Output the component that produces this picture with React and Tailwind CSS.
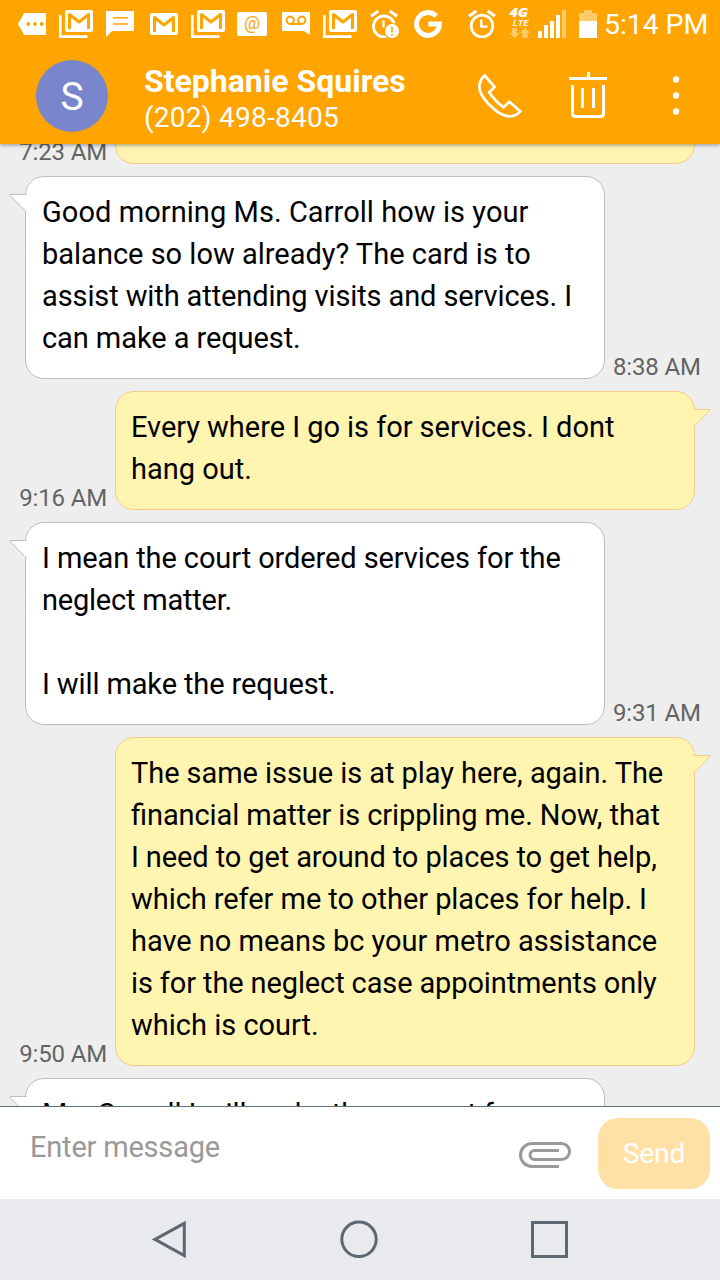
const MESSAGES = [
  { mine: true, time: "7:23 AM", lines: [["", ""]] },
  {
    mine: false,
    time: "8:38 AM",
    lines: [
      ["Good morning Ms. Carroll how is your", "tracking-[0.06px]"],
      ["balance so low already? The card is to", ""],
      ["assist with attending visits and services. I", "tracking-[-0.11px]"],
      ["can make a request.", "tracking-[-0.08px]"],
    ],
  },
  {
    mine: true,
    time: "9:16 AM",
    lines: [
      ["Every where I go is for services. I dont", "tracking-[-0.04px]"],
      ["hang out.", ""],
    ],
  },
  {
    mine: false,
    time: "9:31 AM",
    lines: [
      ["I mean the court ordered services for the", "tracking-[-0.1px]"],
      ["neglect matter.", "tracking-[-0.22px]"],
      ["", ""],
      ["I will make the request.", "tracking-[-0.12px]"],
    ],
  },
  {
    mine: true,
    time: "9:50 AM",
    lines: [
      ["The same issue is at play here, again. The", "tracking-[-0.06px]"],
      ["financial matter is crippling me. Now, that", "tracking-[-0.09px]"],
      ["I need to get around to places to get help,", "tracking-[-0.11px]"],
      ["which refer me to other places for help. I", "tracking-[-0.06px]"],
      ["have no means bc your metro assistance", "tracking-[-0.03px]"],
      ["is for the neglect case appointments only", "tracking-[-0.12px]"],
      ["which is court.", ""],
    ],
  },
  { mine: false, time: "", lines: [["Ms. Carroll I will make the request for", "tracking-[-0.03px]"], ["", ""]] },
];

function Envelope({ stacked, className }) {
  return (
    <svg className={className} viewBox={stacked ? "0 0 34 28" : "0 0 28 22"} fill="none">
      {stacked && <path d="M1.3 5V26.6H28.5" stroke="#fff" strokeWidth="2.6" />}
      <g transform={stacked ? "translate(6 0)" : undefined}>
        <rect width="28" height="22" rx="2.2" fill="#fff" />
        <path d="M4.5 19V4.5L14 12L23.5 4.5V19" stroke="#ffa400" strokeWidth="3" strokeLinejoin="round" />
      </g>
    </svg>
  );
}

function StatusBar() {
  return (
    <div className="flex h-12 items-start bg-[#ffa400]">
      <svg className="mt-[13px] ml-[18px] h-[22px] w-7 shrink-0" viewBox="0 0 28 22">
        <path d="M6.3 0H28V22H6.3L0 11Z" fill="#fff" />
        <g fill="#ffa400">
          <circle cx="10.3" cy="11" r="1.9" />
          <circle cx="17" cy="11" r="1.9" />
          <circle cx="23.7" cy="11" r="1.9" />
        </g>
      </svg>
      <Envelope stacked className="mt-[10px] ml-[13px] h-7 w-[34px] shrink-0" />
      <svg className="mt-[11px] ml-[13px] h-[26px] w-7 shrink-0" viewBox="0 0 28 26">
        <path d="M0 0H28V20H6L0 26Z" fill="#fff" />
        <path d="M7 6.7H22M7 13H22" stroke="#ffa400" strokeWidth="1.4" />
      </svg>
      <Envelope className="mt-[13px] ml-4 h-[22px] w-7 shrink-0" />
      <Envelope stacked className="mt-[10px] ml-[13px] h-7 w-[34px] shrink-0" />
      <div className="mt-3 ml-3 flex h-6 w-[30px] shrink-0 justify-center rounded-[2px] bg-white text-[18px] leading-[22px] text-[#ffa400]">
        @
      </div>
      <svg className="mt-3 ml-[15px] h-[23px] w-7 shrink-0" viewBox="0 0 28 23">
        <path d="M0 0H28V23L22 19H0Z" fill="#fff" />
        <g fill="none" stroke="#ffa400" strokeWidth="2">
          <circle cx="8.2" cy="8.2" r="3.6" />
          <circle cx="19.8" cy="8.2" r="3.6" />
          <path d="M8 12H20" />
        </g>
      </svg>
      <Envelope stacked className="mt-[10px] ml-[13px] h-7 w-[34px] shrink-0" />
      <svg className="mt-[10px] ml-[13px] h-7 w-[29px] shrink-0" viewBox="0 0 29 28">
        <g stroke="#fff" fill="none">
          <circle cx="14" cy="16.5" r="10.5" strokeWidth="2.8" />
          <path d="M1 6.2L8.3 1M19.7 1L27 6.2" strokeWidth="3.2" />
          <path d="M13.5 10V17.5" strokeWidth="2.2" />
        </g>
        <circle cx="22" cy="21" r="8.2" fill="#ffa400" />
        <circle cx="22" cy="21" r="7" fill="#fff" />
        <path d="M22 16.5V22.4M22 24V25.8" stroke="#ffa400" strokeWidth="1.6" />
      </svg>
      <svg className="mt-[10px] ml-[15px] h-7 w-7 shrink-0" viewBox="0 0 28 28" fill="none">
        <path d="M22.2 6.1A11.4 11.4 0 1 0 25.4 14H14.3" stroke="#fff" strokeWidth="5" />
      </svg>
      <svg className="mt-[10px] ml-[26px] h-7 w-7 shrink-0" viewBox="0 0 28 28" fill="none" stroke="#fff">
        <circle cx="14" cy="16" r="10.8" strokeWidth="2.8" />
        <path d="M1 6.2L8.3 1M19.7 1L27 6.2" strokeWidth="3.2" />
        <path d="M13.3 9.5V16.6H19.5" strokeWidth="2.4" />
      </svg>
      <svg className="mt-2 ml-[12px] h-[31px] w-[24px] shrink-0 overflow-visible" viewBox="0 0 24 31">
        <text x="1.2" y="9.4" fill="#fff" fontSize="12.4" fontWeight="800" fontStyle="italic" textLength="19" lengthAdjust="spacingAndGlyphs" fontFamily="Open Sans, sans-serif">4G</text>
        <text x="4.5" y="18.3" fill="#fff" fontSize="9.4" fontWeight="600" fontStyle="italic" textLength="16" lengthAdjust="spacingAndGlyphs" fontFamily="Open Sans, sans-serif">LTE</text>
        <path d="M4 20H9V25H12L6.5 30L1 25H4ZM14.5 30H19.5V25H22.5L17 20L11.5 25H14.5Z" fill="#ffcb66" />
      </svg>
      <svg className="mt-[10px] ml-[6px] h-7 w-7 shrink-0" viewBox="0 0 28 28" fill="#fff">
        <path d="M0 21H4V28H0ZM6 15H10V28H6ZM12 11H16V28H12ZM18 5H22V28H18Z" />
        <path d="M24 0H28V28H24Z" fill="#ffcb66" />
      </svg>
      <svg className="mt-[10px] ml-[13px] h-7 w-[18px] shrink-0" viewBox="0 0 18 28">
        <path d="M5 0H13V3H18V11H0V3H5Z" fill="#ffcb66" />
        <path d="M0 11H18V28H0Z" fill="#fff" />
      </svg>
      <span className="ml-[7px] text-[28.5px] leading-[50px] tracking-[-0.1px] whitespace-nowrap text-white">5:14 PM</span>
    </div>
  );
}

function Header() {
  return (
    <header className="relative z-10 h-36 shrink-0 bg-[#ffa400] shadow-[0_1px_4px_rgba(0,0,0,0.4)]">
      <StatusBar />
      <div className="flex h-24 items-center pl-9 text-white">
        <div className="flex size-[72px] shrink-0 items-center justify-center rounded-full bg-[#7986cb] pt-[3px] text-[39px] leading-none">
          S
        </div>
        <div className="ml-9 w-[333px] pt-[7px] whitespace-nowrap">
          <div className="-mt-px mb-px text-[32px] leading-9 font-bold">Stephanie Squires</div>
          <div className="text-[28px] leading-9 tracking-[0.25px]">(202) 498-8405</div>
        </div>
        <svg className="h-[48px] w-[46px] shrink-0" viewBox="477 72 46 48" fill="none" stroke="#fff" strokeWidth="2.7">
          <path d="M484.7 75.5L494.6 87L489.2 92.2Q494.5 100.5 503.6 107.3L509.3 101.8L520.3 111.3C515 117.3 507 118 499 112.8C492 108 485.5 101.5 481.5 94.5C477.5 87.5 479.5 79.5 484.7 75.5Z" />
        </svg>
        <svg className="ml-[46px] h-[48px] w-[38px] shrink-0" viewBox="569 72 38 48" fill="none" stroke="#fff" strokeWidth="3">
          <path d="M569 78.5H607M588.5 72V78M572.5 85V113.5Q572.5 116.5 575.5 116.5H600.5Q603.5 116.5 603.5 113.5V85M582.5 88V108M593.5 88V108" />
        </svg>
        <svg className="ml-[65px] h-[48px] w-2 shrink-0" viewBox="0 0 8 48" fill="#fff">
          <circle cx="4" cy="7.5" r="3.2" />
          <circle cx="4" cy="23.5" r="3.2" />
          <circle cx="4" cy="39.5" r="3.2" />
        </svg>
      </div>
    </header>
  );
}

function Tail({ mine }) {
  return mine ? (
    <svg className="absolute top-[16px] -right-[17px] h-5 w-[18px]" viewBox="0 0 18 20">
      <path d="M0 1.5H17L1.5 18.5H0Z" fill="#fff5b0" />
      <path d="M0.5 1.5H17V2.5L0.5 19" fill="none" stroke="#f6cb85" />
    </svg>
  ) : (
    <svg className="absolute top-[16px] -left-[17px] h-5 w-[18px]" viewBox="0 0 18 20">
      <path d="M18 1.5H1L16.5 18.5H18Z" fill="#fff" />
      <path d="M17.5 1.5H1V2.5L17.5 19" fill="none" stroke="#bdbdbd" />
    </svg>
  );
}

function Message({ mine, time, lines }) {
  return (
    <div className={mine ? "flex flex-row-reverse items-end pr-[25px]" : "flex items-end pl-[25px]"}>
      <div
        className={
          mine
            ? "relative w-[580px] rounded-[19px] border border-[#f6cb85] bg-[#fff5b0] pt-[14px] pr-2 pb-[19px] pl-[15px]"
            : "relative w-[580px] rounded-[19px] border border-[#bdbdbd] bg-white pt-[14px] pr-2 pb-[19px] pl-4"
        }
      >
        <Tail mine={mine} />
        {lines.map(([line, tracking], i) => (
          <p
            key={i}
            className={`h-[42px] text-[29px] leading-[42px] whitespace-nowrap text-black [font-feature-settings:'liga'_1] ${tracking}`}
          >
            {line}
          </p>
        ))}
      </div>
      <time className="mx-2 mb-[-2px] text-[24px] leading-7 tracking-[-0.15px] whitespace-nowrap text-[#646464]">{time}</time>
    </div>
  );
}

function Composer() {
  return (
    <div className="flex h-[93px] shrink-0 items-start border-t border-[#607482] bg-white">
      <span className="mt-[22px] ml-[30px] w-[489px] text-[29px] leading-9 tracking-[-0.2px] text-[#999]">Enter message</span>
      <svg className="mt-[34px] h-7 w-[53px] shrink-0" viewBox="519 1141 53 28" fill="none" stroke="#999" strokeWidth="3">
        <path d="M559 1166.5H532A11.5 11.5 0 0 1 532 1143.5H561.5A8 8 0 0 1 561.5 1159.5H534.5A4.5 4.5 0 0 1 534.5 1150.5H559" />
      </svg>
      <button className="mt-[11px] ml-[26px] h-[71px] w-[112px] shrink-0 rounded-[20px] bg-[#ffe0a5] text-[28px] text-white">
        Send
      </button>
    </div>
  );
}

function NavBar() {
  return (
    <nav className="flex h-[81px] shrink-0 items-start bg-[#e9eaee] pt-[21px]">
      <svg className="ml-[152px] h-[38px] w-[35px]" viewBox="0 0 35 38" fill="none" stroke="#5c6972" strokeWidth="3">
        <path d="M3 19.4L32.3 3.4V35.6Z" />
      </svg>
      <svg className="ml-[153px] h-[38px] w-[38px]" viewBox="0 0 38 38" fill="none" stroke="#5c6972" strokeWidth="3">
        <circle cx="19" cy="19.3" r="17.2" />
      </svg>
      <div className="mt-px ml-[153px] size-[37px] border-3 border-[#5c6972]" />
    </nav>
  );
}

export default function App() {
  return (
    <div className="flex h-[1280px] w-[720px] flex-col overflow-hidden bg-[#eee] font-[Roboto,sans-serif]">
      <Header />
      <main className="h-[962px] shrink-0 overflow-hidden">
        <div className="-mt-[57px] flex flex-col gap-3">
          {MESSAGES.map((m, i) => (
            <Message key={i} {...m} />
          ))}
        </div>
      </main>
      <Composer />
      <NavBar />
    </div>
  );
}
